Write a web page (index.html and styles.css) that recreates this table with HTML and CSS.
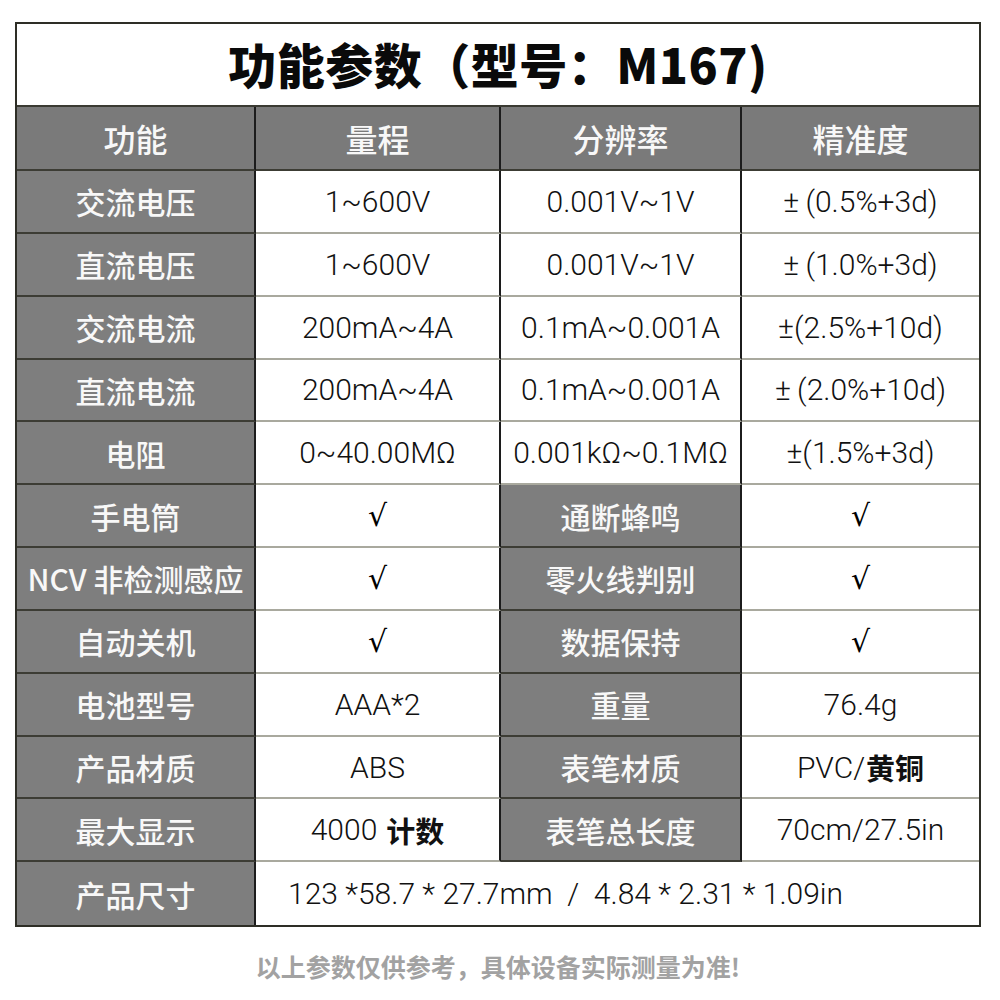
FILE: index.html
```html
<!DOCTYPE html>
<html lang="zh">
<head>
<meta charset="utf-8">
<link rel="stylesheet" href="styles.css">
</head>
<body>
<div class="sheet">
  <div class="grid">
    <div class="title">功能参数（型号：M167)</div>

    <div class="c h">功能</div>
    <div class="c h">量程</div>
    <div class="c h">分辨率</div>
    <div class="c h last">精准度</div>

    <div class="c g">交流电压</div>
    <div class="c w">1~600V</div>
    <div class="c w">0.001V~1V</div>
    <div class="c w last">±&#8201;(0.5%+3d)</div>

    <div class="c g">直流电压</div>
    <div class="c w">1~600V</div>
    <div class="c w">0.001V~1V</div>
    <div class="c w last">±&#8201;(1.0%+3d)</div>

    <div class="c g">交流电流</div>
    <div class="c w">200mA~4A</div>
    <div class="c w">0.1mA~0.001A</div>
    <div class="c w last">±(2.5%+10d)</div>

    <div class="c g">直流电流</div>
    <div class="c w">200mA~4A</div>
    <div class="c w">0.1mA~0.001A</div>
    <div class="c w last">±&#8201;(2.0%+10d)</div>

    <div class="c g">电阻</div>
    <div class="c w">0~40.00MΩ</div>
    <div class="c w">0.001kΩ~0.1MΩ</div>
    <div class="c w last">±(1.5%+3d)</div>

    <div class="c g">手电筒</div>
    <div class="c w chk">√</div>
    <div class="c g">通断蜂鸣</div>
    <div class="c w chk last">√</div>

    <div class="c g">NCV 非检测感应</div>
    <div class="c w chk">√</div>
    <div class="c g">零火线判别</div>
    <div class="c w chk last">√</div>

    <div class="c g">自动关机</div>
    <div class="c w chk">√</div>
    <div class="c g">数据保持</div>
    <div class="c w chk last">√</div>

    <div class="c g">电池型号</div>
    <div class="c w">AAA*2</div>
    <div class="c g">重量</div>
    <div class="c w last">76.4g</div>

    <div class="c g">产品材质</div>
    <div class="c w">ABS</div>
    <div class="c g">表笔材质</div>
    <div class="c w last">PVC/<b>黄铜</b></div>

    <div class="c g">最大显示</div>
    <div class="c w">4000<b class="gap">计数</b></div>
    <div class="c g">表笔总长度</div>
    <div class="c w last">70cm/27.5in</div>

    <div class="c g end">产品尺寸</div>
    <div class="c w span end">123 *58.7 * 27.7mm&nbsp; / &nbsp;4.84 * 2.31 * 1.09in</div>
  </div>
  <p class="note">以上参数仅供参考，具体设备实际测量为准!</p>
</div>
</body>
</html>
```

FILE: styles.css
```css
html, body {
  margin: 0;
  padding: 0;
  background: #ffffff;
}

.sheet {
  padding: 22px 0 0 15px;
}

.grid {
  width: 966px;
  box-sizing: border-box;
  border: 2px solid #2e2e26;
  display: grid;
  grid-template-columns: 239px 245px 241px 1fr;
  grid-template-rows: 83px 64px repeat(12, 62.85px);
}

.title {
  grid-column: 1 / 5;
  display: flex;
  align-items: center;
  justify-content: center;
  padding-bottom: 4px;
  font-family: "Noto Sans CJK SC", sans-serif;
  font-weight: 900;
  font-size: 48px;
  color: #0a0a0a;
  border-bottom: 2px solid #3a3a32;
  letter-spacing: 0.5px;
}

.c {
  box-sizing: border-box;
  display: flex;
  align-items: center;
  justify-content: center;
  border-right: 2px solid #1c1c1c;
  border-bottom: 2px solid #3c3c34;
  white-space: nowrap;
}

.c.last {
  border-right: none;
}

.h, .g {
  background: #7e7e7e;
  color: #f8f8f8;
  font-family: "Noto Sans CJK SC Medium", "Noto Sans CJK SC", sans-serif;
  font-weight: 500;
}

.h {
  font-size: 32px;
  background: #7a7a7a;
}

.g {
  font-size: 30px;
}

.w {
  background: #ffffff;
  color: #111111;
  font-family: Roboto, "Noto Sans CJK SC", sans-serif;
  font-size: 30px;
  font-weight: 300;
  border-bottom-color: #a9a99e;
}

.w b {
  font-family: "Noto Sans CJK SC", sans-serif;
  font-weight: 700;
  font-size: 29px;
  margin-left: 1px;
}

.w b.gap {
  margin-left: 9px;
}

.chk {
  font-family: "DejaVu Sans", sans-serif;
  font-size: 30px;
  font-weight: 400;
  color: #000;
}

.span {
  grid-column: 2 / 5;
  justify-content: flex-start;
  padding-left: 32px;
  border-right: none;
}

.end {
  border-bottom: none;
}

.note {
  margin: 21px 0 0 0;
  width: 966px;
  text-align: center;
  font-family: "Noto Sans CJK SC", sans-serif;
  font-weight: 700;
  font-size: 25px;
  color: #a2a2a2;
}
```
